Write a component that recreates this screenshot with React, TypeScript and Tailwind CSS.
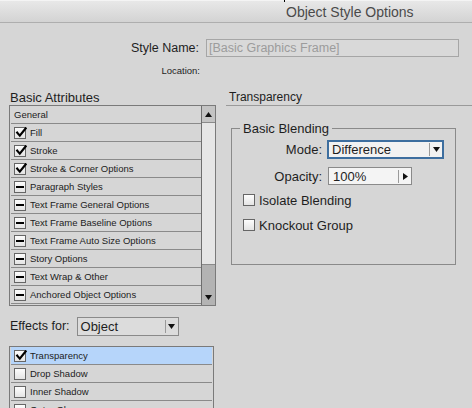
import React from "react";

const Check = () => (
  <svg width="12" height="12" viewBox="0 0 12 12" className="absolute left-[0px] top-[-1px]">
    <path d="M2.2 5.6 L4.8 8.6 L10.6 1.4" fill="none" stroke="#000" strokeWidth="2.2" strokeLinecap="square" />
  </svg>
);

function Box({ kind }: { kind: "check" | "dash" | "empty" }) {
  return (
    <div className="relative w-[12px] h-[12px] border border-[#666] bg-gradient-to-b from-[#fdfdfd] to-[#e4e4e4] shrink-0">
      {kind === "check" && <Check />}
      {kind === "dash" && <div className="absolute left-[1px] top-[4px] w-[8px] h-[2px] bg-black" />}
    </div>
  );
}

function Row({ label, kind, selected }: { label: string; kind: "check" | "dash" | "empty"; selected?: boolean }) {
  return (
    <div className={`h-[18px] flex items-center border-b border-[#8a8a8a] pl-[3px] gap-[4px] pt-[1px] ${selected ? "bg-[#b6d5fa]" : ""}`}>
      <Box kind={kind} />
      <span className="text-[9.5px] text-[#1c1c1c] leading-none">{label}</span>
    </div>
  );
}

export default function App() {
  const attrs: [string, "check" | "dash"][] = [
    ["Fill", "check"],
    ["Stroke", "check"],
    ["Stroke & Corner Options", "check"],
    ["Paragraph Styles", "dash"],
    ["Text Frame General Options", "dash"],
    ["Text Frame Baseline Options", "dash"],
    ["Text Frame Auto Size Options", "dash"],
    ["Story Options", "dash"],
    ["Text Wrap & Other", "dash"],
    ["Anchored Object Options", "dash"],
  ];
  return (
    <div className="w-[472px] h-[408px] overflow-hidden bg-[#d6d6d6] text-[#1e1e1e] relative" style={{ fontFamily: '"Liberation Sans", Arial, sans-serif' }}>
      {/* title bar */}
      <div className="h-[23px] border-t border-t-[#f4f4f4] border-b border-b-[#aeaeae] bg-gradient-to-b from-[#e8e8e8] to-[#d3d3d3] flex items-center pl-[286px]">
        <span className="text-[14px] text-[#4a4a4a] leading-none">Object Style Options</span>
      </div>
      <div className="absolute left-[284px] top-0 w-[1px] h-[2px] bg-black" />

      {/* style name */}
      <div className="mt-[16px] flex items-center h-[18px]">
        <div className="w-[200px] text-right text-[12.5px] leading-none pr-[1px]">Style Name:</div>
        <div className="ml-[6px] w-[253px] h-[18px] border border-[#a6a6a6] bg-[#d9d9d9] flex items-center pl-[2px]">
          <span className="text-[12.5px] text-[#9c9c9c] leading-none">[Basic Graphics Frame]</span>
        </div>
      </div>
      <div className="mt-[8px] h-[12px] flex items-center">
        <div className="w-[200px] text-right text-[9.5px] leading-none">Location:</div>
      </div>

      {/* columns */}
      <div className="mt-[12px] flex">
        {/* left */}
        <div className="ml-[9px] w-[207px]">
          <div className="h-[16px] flex items-center pl-[1px]">
            <span className="text-[13px] leading-none">Basic Attributes</span>
          </div>
          <div className="h-[201px] border border-[#7a7a7a] flex">
            <div className="flex-1 pl-[1px] pt-[0px]">
              <div className="h-[18px] flex items-center border-b border-[#8a8a8a] pl-[3px] pt-[1px]">
                <span className="text-[9.5px] leading-none text-[#1c1c1c]">General</span>
              </div>
              {attrs.map(([l, k]) => (
                <Row key={l} label={l} kind={k} />
              ))}
            </div>
            <div className="w-[14px] border-l border-[#6e6e6e] flex flex-col">
              <div className="h-[17px] bg-[#c4c4c4] border-b border-[#8a8a8a] flex items-center justify-center">
                <svg width="7" height="5" viewBox="0 0 7 5"><path d="M0 5 L3.5 0 L7 5 Z" fill="#111" /></svg>
              </div>
              <div className="flex-1 bg-[#e6e6e6]" />
              <div className="h-[41px] bg-[#b3b3b3] border-t border-[#8a8a8a] flex items-end justify-center pb-[5px]">
                <svg width="7" height="5" viewBox="0 0 7 5"><path d="M0 0 L7 0 L3.5 5 Z" fill="#111" /></svg>
              </div>
            </div>
          </div>

          <div className="mt-[11px] flex items-center h-[19px]">
            <span className="text-[12.5px] leading-none pl-[1px]">Effects for:</span>
            <div className="ml-[7px] w-[102px] h-[19px] border border-[#8a8a8a] bg-[#dcdcdc] flex items-center">
              <span className="flex-1 pl-[3px] text-[13px] leading-none">Object</span>
              <div className="w-[1px] h-[13px] bg-[#9a9a9a]" />
              <div className="w-[12px] flex justify-center">
                <svg width="7" height="5" viewBox="0 0 7 5"><path d="M0 0 L7 0 L3.5 5 Z" fill="#111" /></svg>
              </div>
            </div>
          </div>

          <div className="mt-[10px] w-[205px] h-[80px] border border-[#7a7a7a] border-b-0 pl-[1px] pr-[1px]">
            <Row label="Transparency" kind="check" selected />
            <Row label="Drop Shadow" kind="empty" />
            <Row label="Inner Shadow" kind="empty" />
            <Row label="Outer Glow" kind="empty" />
          </div>
        </div>

        {/* right */}
        <div className="ml-[13px] flex-1">
          <div className="h-[16px] flex items-center">
            <span className="text-[12px] leading-none">Transparency</span>
          </div>
          <div className="h-[1px] bg-[#9a9a9a] -ml-[3px]" />
          <div className="mt-[22px] ml-[2px] w-[225px] h-[137px] border border-[#8a8a8a] relative">
            <div className="absolute left-[8px] top-[-8px] px-[3px] bg-[#d6d6d6] text-[13px] leading-none h-[14px] flex items-center">Basic Blending</div>
            <div className="mt-[11px] flex items-center h-[19px]">
              <div className="w-[90px] text-right text-[13px] leading-none">Mode:</div>
              <div className="ml-[5px] w-[117px] h-[19px] border-2 border-[#3d6e9f] bg-[#f2f2f2] flex items-center">
                <span className="flex-1 pl-[3px] text-[13px] leading-none">Difference</span>
                <div className="w-[1px] h-[13px] bg-[#9a9a9a]" />
                <div className="w-[12px] flex justify-center">
                  <svg width="7" height="5" viewBox="0 0 7 5"><path d="M0 0 L7 0 L3.5 5 Z" fill="#111" /></svg>
                </div>
              </div>
            </div>
            <div className="mt-[8px] flex items-center h-[18px]">
              <div className="w-[90px] text-right text-[13px] leading-none">Opacity:</div>
              <div className="ml-[6px] w-[84px] h-[18px] border border-[#8a8a8a] bg-[#f4f4f4] flex items-center">
                <span className="flex-1 pl-[4px] text-[13px] leading-none">100%</span>
                <div className="w-[1px] h-[13px] bg-[#9a9a9a]" />
                <div className="w-[12px] flex justify-center">
                  <svg width="5" height="7" viewBox="0 0 5 7"><path d="M0 0 L5 3.5 L0 7 Z" fill="#111" /></svg>
                </div>
              </div>
            </div>
            <div className="mt-[8px] ml-[11px] flex items-center h-[14px] gap-[4px]">
              <Box kind="empty" />
              <span className="text-[13px] leading-none">Isolate Blending</span>
            </div>
            <div className="mt-[11px] ml-[11px] flex items-center h-[14px] gap-[4px]">
              <Box kind="empty" />
              <span className="text-[13px] leading-none">Knockout Group</span>
            </div>
          </div>
        </div>
      </div>
    </div>
  );
}
